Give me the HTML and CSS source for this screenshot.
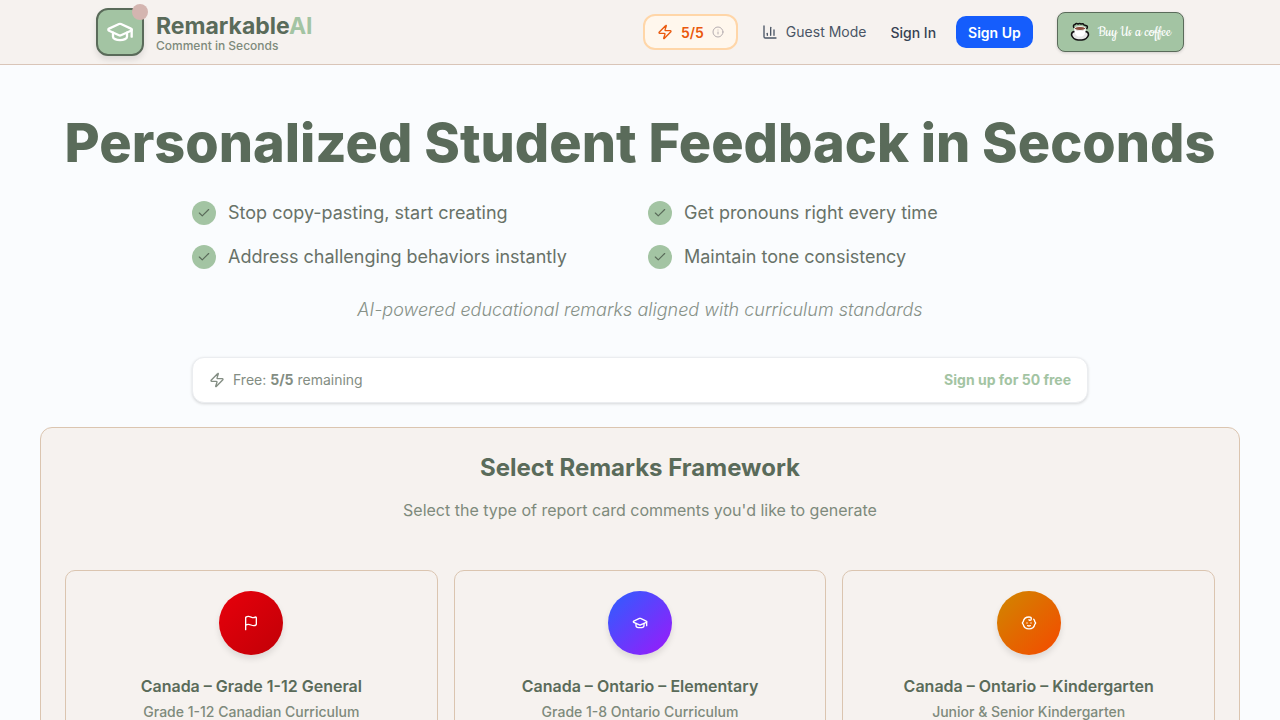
FILE: index.html
```html
<!DOCTYPE html>
<html lang="en">
<head>
    <meta charset="UTF-8">
    <meta name="viewport" content="width=device-width, initial-scale=1.0">
    <title>RemarkableAI - Comment in Seconds</title>
    <link rel="stylesheet" href="styles.css">
</head>
<body>
    <header class="site-header">
        <div class="header-inner">
            <a href="#" class="brand">
                <span class="logo">
                    <svg class="icon" width="28" height="28" viewBox="0 0 24 24"><path d="M21.42 10.922a1 1 0 0 0-.019-1.838L12.83 5.18a2 2 0 0 0-1.66 0L2.6 9.08a1 1 0 0 0 0 1.832l8.57 3.908a2 2 0 0 0 1.66 0z"/><path d="M22 10v6"/><path d="M6 12.5V16a6 3 0 0 0 12 0v-3.5"/></svg>
                    <span class="logo-dot"></span>
                </span>
                <span class="brand-text">
                    <span class="brand-name">Remarkable<span class="brand-ai">AI</span></span>
                    <span class="brand-tagline">Comment in Seconds</span>
                </span>
            </a>
            <nav class="nav">
                <button type="button" class="credits">
                    <svg class="icon" width="16" height="16" viewBox="0 0 24 24"><path d="M4 14a1 1 0 0 1-.78-1.63l9.9-10.2a.5.5 0 0 1 .86.46l-1.92 6.02A1 1 0 0 0 13 10h7a1 1 0 0 1 .78 1.63l-9.9 10.2a.5.5 0 0 1-.86-.46l1.92-6.02A1 1 0 0 0 11 14z"/></svg>
                    <span>5/5</span>
                    <svg class="icon info" width="12" height="12" viewBox="0 0 24 24"><circle cx="12" cy="12" r="10"/><path d="M12 16v-4"/><path d="M12 8h.01"/></svg>
                </button>
                <span class="guest">
                    <svg class="icon" width="16" height="16" viewBox="0 0 24 24"><path d="M3 3v16a2 2 0 0 0 2 2h16"/><path d="M18 17V9"/><path d="M13 17V5"/><path d="M8 17v-3"/></svg>
                    Guest Mode
                </span>
                <div class="auth">
                    <button type="button" class="sign-in">Sign In</button>
                    <button type="button" class="sign-up">Sign Up</button>
                </div>
                <a href="#" class="coffee">
                    <svg width="20" height="20" viewBox="0 0 20 20">
                        <path d="M4 6 Q2.500 3 5 2.500 Q6 .8 8 2 Q10 .8 11 2 Q13 1 14 3 L17 4 Q18 5 16.500 7" fill="#a3c4a3" stroke="#111" stroke-width="1.500"/>
                        <path d="M1.500 13 Q1.500 10 4 9.500 H16 Q18.500 10 18.500 13 Q17 17.500 12 18 H8 Q3 17.500 1.500 13Z" fill="#e8e8e8" stroke="#111" stroke-width="1.500"/>
                        <path d="M4 6.500 Q4.500 13 8 14.500 H12 Q15.500 13 16 6.500Z" fill="#fff"/>
                        <ellipse cx="10" cy="6.500" rx="5.500" ry="2" fill="#8a4b3a" stroke="#eee"/>
                    </svg>
                    <span>Buy Us a coffee</span>
                </a>
            </nav>
        </div>
    </header>

    <main class="main">
        <section class="hero">
            <h1>Personalized Student Feedback in Seconds</h1>
            <ul class="benefits">
                <li><span class="check"><svg class="icon" width="14" height="14" viewBox="0 0 24 24"><path d="M20 6 9 17l-5-5"/></svg></span>Stop copy-pasting, start creating</li>
                <li><span class="check"><svg class="icon" width="14" height="14" viewBox="0 0 24 24"><path d="M20 6 9 17l-5-5"/></svg></span>Get pronouns right every time</li>
                <li><span class="check"><svg class="icon" width="14" height="14" viewBox="0 0 24 24"><path d="M20 6 9 17l-5-5"/></svg></span>Address challenging behaviors instantly</li>
                <li><span class="check"><svg class="icon" width="14" height="14" viewBox="0 0 24 24"><path d="M20 6 9 17l-5-5"/></svg></span>Maintain tone consistency</li>
            </ul>
            <p class="subtitle">AI-powered educational remarks aligned with curriculum standards</p>
        </section>

        <div class="usage">
            <span class="usage-left">
                <svg class="icon" width="16" height="16" viewBox="0 0 24 24"><path d="M4 14a1 1 0 0 1-.78-1.63l9.9-10.2a.5.5 0 0 1 .86.46l-1.92 6.02A1 1 0 0 0 13 10h7a1 1 0 0 1 .78 1.63l-9.9 10.2a.5.5 0 0 1-.86-.46l1.92-6.02A1 1 0 0 0 11 14z"/></svg>
                <span>Free: <strong>5/5</strong> remaining</span>
            </span>
            <a href="#" class="usage-link">Sign up for 50 free</a>
        </div>

        <section class="frameworks">
            <h2>Select Remarks Framework</h2>
            <p class="lead">Select the type of report card comments you'd like to generate</p>
            <div class="cards">
                <button type="button" class="card">
                    <span class="badge badge-red">
                        <svg class="icon" width="16" height="16" viewBox="0 0 24 24"><path d="M4 22V4a1 1 0 0 1 .4-.8A6 6 0 0 1 8 2c3 0 5 2 7.333 2q2 0 3.067-.8A1 1 0 0 1 20 4v10a1 1 0 0 1-.4.8A6 6 0 0 1 16 16c-3 0-5-2-8-2a6 6 0 0 0-4 1.528"/></svg>
                    </span>
                    <span class="card-title">Canada – Grade 1-12 General</span>
                    <span class="card-text">Grade 1-12 Canadian Curriculum</span>
                </button>
                <button type="button" class="card">
                    <span class="badge badge-purple">
                        <svg class="icon" width="16" height="16" viewBox="0 0 24 24"><path d="M21.42 10.922a1 1 0 0 0-.019-1.838L12.83 5.18a2 2 0 0 0-1.66 0L2.6 9.08a1 1 0 0 0 0 1.832l8.57 3.908a2 2 0 0 0 1.66 0z"/><path d="M22 10v6"/><path d="M6 12.5V16a6 3 0 0 0 12 0v-3.5"/></svg>
                    </span>
                    <span class="card-title">Canada – Ontario – Elementary</span>
                    <span class="card-text">Grade 1-8 Ontario Curriculum</span>
                </button>
                <button type="button" class="card">
                    <span class="badge badge-orange">
                        <svg class="icon" width="16" height="16" viewBox="0 0 24 24"><path d="M9 12h.01"/><path d="M15 12h.01"/><path d="M10 16c.5.3 1.2.5 2 .5s1.5-.2 2-.5"/><path d="M19 6.3a9 9 0 0 1 1.8 3.9 2 2 0 0 1 0 3.6 9 9 0 0 1-17.6 0 2 2 0 0 1 0-3.6A9 9 0 0 1 12 3c2 0 3.5 1.1 3.5 2.5s-.9 2.5-2 2.5c-.8 0-1.5-.4-1.5-1"/></svg>
                    </span>
                    <span class="card-title">Canada – Ontario – Kindergarten</span>
                    <span class="card-text">Junior &amp; Senior Kindergarten</span>
                </button>
            </div>
        </section>
    </main>
</body>
</html>
```
FILE: styles.css
```css
* {
    box-sizing: border-box;
}
body {
    margin: 0;
    font-family: Inter, sans-serif;
    font-size: 16px;
    line-height: 24px;
    color: #5a6b5a;
    background-color: #fafcfe;
}
h1, h2, p, ul {
    margin: 0;
    padding: 0;
}
a {
    text-decoration: none;
    color: inherit;
}
button {
    font-family: inherit;
    border: none;
    background: none;
    cursor: pointer;
}
.icon {
    flex-shrink: 0;
    fill: none;
    stroke: currentColor;
    stroke-width: 2;
    stroke-linecap: round;
    stroke-linejoin: round;
}

/* Header */
.site-header {
    background-color: #f6f2ef;
    border-bottom: 1px solid #d9c5b8;
}
.header-inner {
    display: flex;
    align-items: center;
    justify-content: space-between;
    max-width: 1152px;
    height: 64px;
    margin: 0 auto;
    padding: 0 32px;
}
.brand {
    display: flex;
    align-items: center;
    gap: 12px;
}
.logo {
    position: relative;
    display: flex;
    align-items: center;
    justify-content: center;
    width: 48px;
    height: 48px;
    border: 2px solid #5a6b5a;
    border-radius: 12px;
    background-color: #a3c4a3;
    color: white;
    box-shadow: 0 4px 6px rgba(0, 0, 0, 0.1);
}
.logo-dot {
    position: absolute;
    top: -6px;
    right: -6px;
    width: 16px;
    height: 16px;
    border-radius: 50%;
    background-color: #d4b5b0;
}
.brand-text {
    display: flex;
    flex-direction: column;
    padding-top: 4px;
}
.brand-name {
    font-size: 23px;
    font-weight: 700;
    line-height: 24px;
}
.brand-ai {
    color: #a3c4a3;
}
.brand-tagline {
    font-size: 12px;
    font-weight: 500;
    line-height: 16px;
    color: #7e8a7c;
}
.nav {
    display: flex;
    align-items: center;
    gap: 24px;
    font-size: 14px;
    font-weight: 500;
}
.credits {
    display: flex;
    align-items: center;
    gap: 8px;
    height: 36px;
    padding: 0 12px;
    border: 2px solid #ffd6a8;
    border-radius: 12px;
    background-color: #fff7ed;
    color: #ea580c;
    font-size: 14px;
    font-weight: 600;
}
.info {
    color: #b5adb0;
}
.guest {
    display: flex;
    align-items: center;
    gap: 8px;
    color: #4a5565;
    font-weight: 400;
}
.auth {
    display: flex;
    align-items: center;
    gap: 20px;
}
.sign-in {
    padding: 0;
    color: #364153;
    font-size: 14px;
    font-weight: 500;
}
.sign-up {
    height: 32px;
    padding: 0 12px;
    border-radius: 10px;
    background-color: #155dfc;
    color: white;
    font-size: 14px;
    font-weight: 600;
}
.coffee {
    display: flex;
    align-items: center;
    gap: 8px;
    height: 40px;
    padding: 0 12px;
    border: 1px solid #5a6b5a;
    border-radius: 8px;
    background-color: #a3c4a3;
    color: white;
    font-family: Cookie, cursive;
    font-size: 16px;
    font-weight: 400;
    box-shadow: 0 1px 3px rgba(0, 0, 0, 0.15);
}

/* Hero */
.main {
    max-width: 1280px;
    margin: 0 auto;
    padding: 48px 40px 40px;
}
.hero {
    text-align: center;
}
h1 {
    font-size: 54px;
    font-weight: 800;
    line-height: 60px;
}
.benefits {
    display: grid;
    grid-template-columns: 1fr 1fr;
    gap: 16px;
    max-width: 896px;
    margin: 26px auto 0;
    list-style: none;
    text-align: left;
}
.benefits li {
    display: flex;
    align-items: center;
    gap: 12px;
    font-size: 18px;
    line-height: 28px;
    color: #687268;
}
.check {
    display: flex;
    align-items: center;
    justify-content: center;
    width: 24px;
    height: 24px;
    border-radius: 50%;
    background-color: #a3c4a3;
    color: #5a6b5a;
}
.subtitle {
    margin-top: 25px;
    font-size: 18px;
    font-style: italic;
    font-weight: 300;
    line-height: 28px;
    color: #879188;
}

/* Free usage bar */
.usage {
    display: flex;
    align-items: center;
    justify-content: space-between;
    max-width: 896px;
    margin: 33px auto 24px;
    padding: 12px 16px;
    border: 1px solid #ebedf0;
    border-radius: 12px;
    background-color: white;
    font-size: 14px;
    line-height: 20px;
    color: #838d83;
    box-shadow: 0 1px 3px rgba(0, 0, 0, 0.15);
}
.usage-left {
    display: flex;
    align-items: center;
    gap: 8px;
}
.usage-link {
    font-weight: 700;
    color: #a3c4a3;
}

/* Framework picker */
.frameworks {
    padding: 24px;
    border: 1px solid #dbc5b0;
    border-radius: 12px;
    background-color: #f6f2ef;
    text-align: center;
}
h2 {
    font-size: 24px;
    font-weight: 700;
    line-height: 32px;
}
.lead {
    margin-top: 14px;
    color: #7e8a7c;
}
.cards {
    display: grid;
    grid-template-columns: repeat(3, 1fr);
    gap: 16px;
    margin-top: 48px;
}
.card {
    display: flex;
    flex-direction: column;
    align-items: center;
    padding: 20px;
    border: 1px solid #dbc5b0;
    border-radius: 10px;
    color: #5a6b5a;
}
.badge {
    display: flex;
    align-items: center;
    justify-content: center;
    width: 64px;
    height: 64px;
    margin-bottom: 19px;
    border-radius: 50%;
    color: white;
    box-shadow: 0 4px 6px rgba(0, 0, 0, 0.1);
}
.badge-red {
    background: linear-gradient(135deg, #e7000b, #c10007);
}
.badge-purple {
    background: linear-gradient(135deg, #2b60ff, #9d18fa);
}
.badge-orange {
    background: linear-gradient(135deg, #d08700, #f54900);
}
.card-title {
    font-size: 16px;
    font-weight: 600;
    line-height: 24px;
}
.card-text {
    margin-top: 4px;
    font-size: 14px;
    font-weight: 500;
    line-height: 20px;
    color: #7e8a7c;
}
```
